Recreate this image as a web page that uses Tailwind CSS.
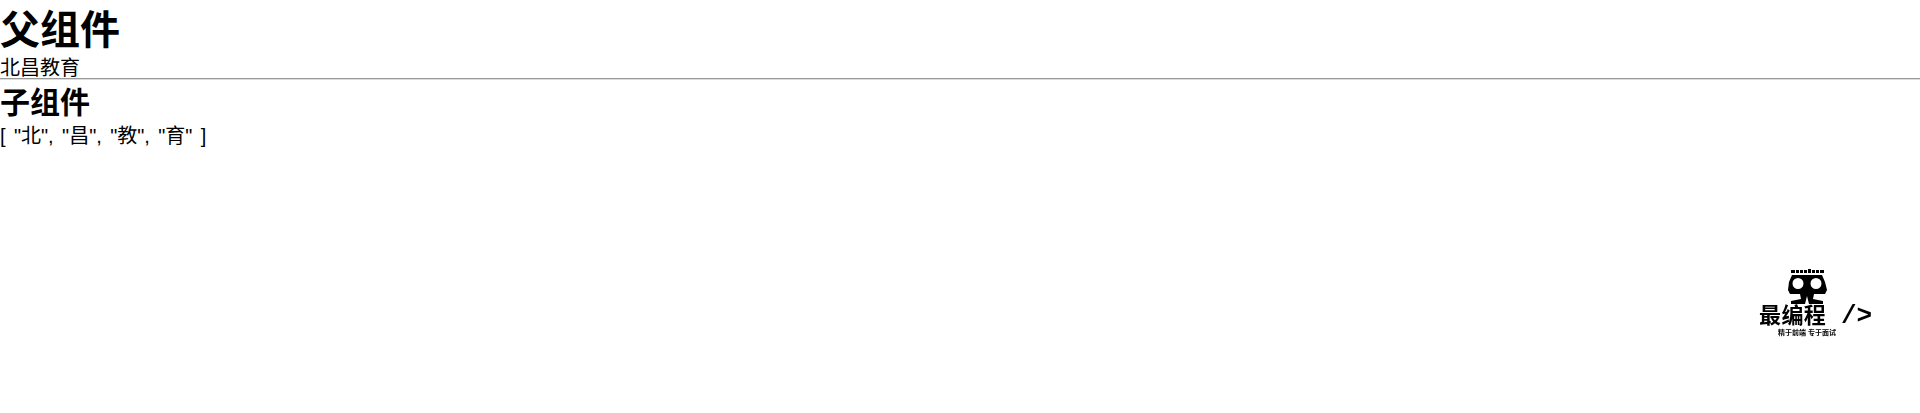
<!DOCTYPE html>
<html lang="zh-CN">
<head>
<meta charset="utf-8">
<title>父组件</title>
<script src="https://cdn.jsdelivr.net/npm/@tailwindcss/browser@4"></script>
</head>
<body class="relative h-[413px] overflow-hidden bg-white text-black text-[20px] leading-[23px] font-['Liberation_Sans','Noto_Sans_CJK_SC',sans-serif]">
  <h1 class="text-[40px] leading-[46px] font-bold pt-[7px]">父组件</h1>
  <p class="mt-[4px] h-[20px]">北昌教育</p>
  <hr class="border-t border-b border-t-[#999] border-b-[#ddd] mt-[1px] mb-[5px]">
  <h2 class="text-[30px] leading-[35px] font-bold">子组件</h2>
  <p class="mt-[5px] whitespace-pre [word-spacing:2.8px]">[ "北", "昌", "教", "育" ]</p>
  <div class="absolute left-[1755px] top-[268px] w-[120px] h-[70px] blur-[0.4px]">
    <svg class="absolute left-0 top-0" width="120" height="38" viewBox="0 0 120 38">
      <g fill="#000">
        <rect x="36" y="2" width="4" height="3"/><rect x="41" y="2" width="3" height="3"/><rect x="45" y="2" width="3" height="3"/><rect x="49" y="2" width="3" height="3"/><rect x="53" y="1" width="3" height="4"/><rect x="57" y="2" width="3" height="3"/><rect x="61" y="2" width="3" height="3"/><rect x="65" y="2" width="4" height="3"/>
        <path fill-rule="evenodd" d="M37 7H67L70 14L72 22L70 26H59L58 31L68 33V36H54L52 28L50 36H36V33L46 31L45 26H35L33 22L34 14ZM43 10A5.5 5.5 0 1 0 43 21A5.5 5.5 0 1 0 43 10ZM61 10A5.5 5.5 0 1 0 61 21A5.5 5.5 0 1 0 61 10Z"/>
      </g>
    </svg>
    <span class="absolute left-[4px] top-[36px] text-[22px] leading-[24px] font-bold tracking-[0.4px] whitespace-nowrap">最编程</span>
    <span class="absolute left-[86px] top-[35px] text-[26px] leading-[26px] font-bold font-['Liberation_Mono',monospace] whitespace-nowrap">/&gt;</span>
    <span class="absolute left-[23px] top-[60px] text-[7px] leading-[9px] font-bold whitespace-nowrap">精于前端 专于面试</span>
  </div>
</body>
</html>
